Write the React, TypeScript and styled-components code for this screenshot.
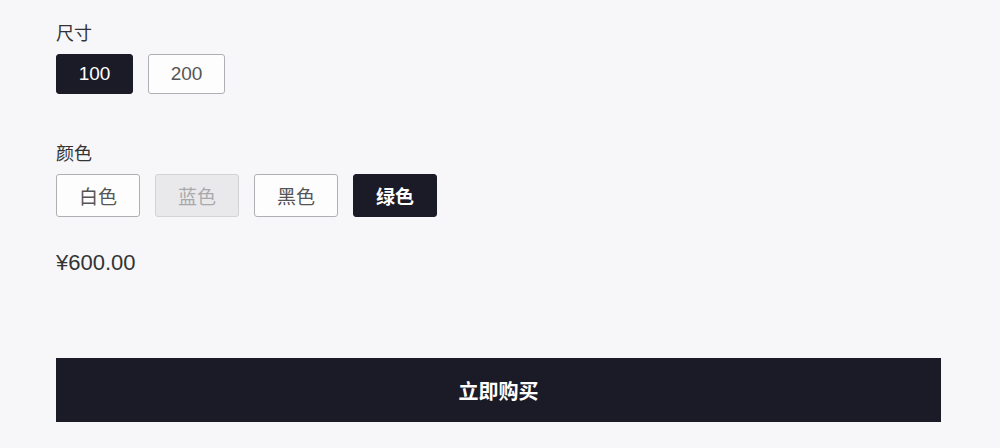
import React, { useState } from "react";
import styled, { createGlobalStyle } from "styled-components";

const GlobalStyle = createGlobalStyle`
  html, body {
    margin: 0;
    padding: 0;
    background: #f7f7f9;
  }
  body {
    font-family: "Liberation Sans", "Noto Sans CJK SC", sans-serif;
    color: #333;
  }
`;

const sizes = ["100", "200"];
const colors = [
  { name: "白色", disabled: false },
  { name: "蓝色", disabled: true },
  { name: "黑色", disabled: false },
  { name: "绿色", disabled: false },
];

const App = () => {
  const [size, setSize] = useState("100");
  const [color, setColor] = useState("绿色");

  return (
    <Page>
      <GlobalStyle />
      <Group>
        <Label>尺寸</Label>
        <Options>
          {sizes.map((s) => (
            <SizeOption key={s} $active={s === size} onClick={() => setSize(s)}>
              {s}
            </SizeOption>
          ))}
        </Options>
      </Group>
      <Group $top={48}>
        <Label>颜色</Label>
        <Options>
          {colors.map((c) => (
            <ColorOption
              key={c.name}
              $active={c.name === color}
              disabled={c.disabled}
              onClick={() => setColor(c.name)}
            >
              {c.name}
            </ColorOption>
          ))}
        </Options>
      </Group>
      <Price>¥600.00</Price>
      <BuyButton>立即购买</BuyButton>
    </Page>
  );
};

export default App;

const Page = styled.div`
  padding: 22px 59px 26px 56px;
  display: flex;
  flex-direction: column;
`;

const Group = styled.div<{ $top?: number }>`
  display: flex;
  flex-direction: column;
  gap: 8px;
  margin-top: ${(p) => p.$top || 0}px;
`;

const Label = styled.div`
  font-size: 18px;
  line-height: 24px;
  color: #333;
`;

const Options = styled.div`
  display: flex;
  gap: 15px;
`;

const OptionBase = styled.button<{ $active?: boolean }>`
  box-sizing: border-box;
  display: flex;
  justify-content: center;
  align-items: center;
  padding: 0;
  border-radius: 3px;
  font-family: "Liberation Sans", "Noto Sans CJK SC", sans-serif;
  cursor: pointer;
  border: 1px solid ${(p) => (p.$active ? "#1b1a27" : "#b0b0b4")};
  background: ${(p) => (p.$active ? "#1b1a27" : "#fdfdfd")};
  color: ${(p) => (p.$active ? "#fff" : "#555")};
  &:disabled {
    background: #e9e9eb;
    border-color: #d3d3d6;
    color: #a9a9ad;
    cursor: not-allowed;
  }
`;

const SizeOption = styled(OptionBase)`
  width: 77px;
  height: 40px;
  font-size: 19px;
`;

const ColorOption = styled(OptionBase)`
  width: 84px;
  height: 43px;
  font-size: 19px;
  font-weight: ${(p) => (p.$active ? 700 : 400)};
`;

const Price = styled.div`
  margin-top: 32px;
  font-size: 22px;
  line-height: 28px;
  color: #333;
`;

const BuyButton = styled.button`
  margin-top: 81px;
  height: 64px;
  width: 100%;
  border: none;
  border-radius: 0;
  background: #1b1a27;
  color: #fff;
  font-family: "Liberation Sans", "Noto Sans CJK SC", sans-serif;
  font-size: 20px;
  font-weight: 700;
  cursor: pointer;
`;
